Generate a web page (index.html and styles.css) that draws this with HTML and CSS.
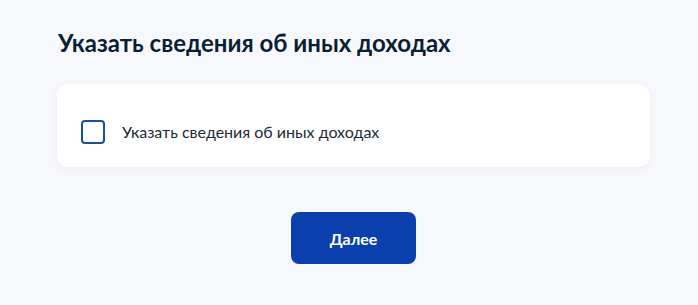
FILE: index.html
```html
<!DOCTYPE html>
<html lang="ru">
<head>
<meta charset="utf-8">
<link rel="stylesheet" href="styles.css">
</head>
<body>
<main class="page">
  <h1 class="title">Указать сведения об иных доходах</h1>
  <section class="card">
    <label class="check">
      <span class="box"></span>
      <span class="label">Указать сведения об иных доходах</span>
    </label>
  </section>
  <div class="actions">
    <button class="btn" type="button">Далее</button>
  </div>
</main>
</body>
</html>
```
FILE: styles.css
```css
html, body {
  margin: 0;
  padding: 0;
  background: #f7f8fc;
  font-family: Lato, "Noto Sans", sans-serif;
  color: #0b1f33;
}
.page {
  width: 593px;
  margin-left: 57px;
  padding-top: 29px;
}
.title {
  margin: 0 0 0 1px;
  font-size: 24px;
  font-weight: 700;
  line-height: 28px;
  color: #0b1f33;
}
.card {
  margin-top: 27px;
  background: #ffffff;
  border-radius: 12px;
  box-shadow: 0 2px 12px rgba(11, 31, 51, 0.04);
  padding: 36px 24px 23px;
}
.check {
  display: flex;
  align-items: center;
  gap: 17px;
}
.box {
  width: 20px;
  height: 20px;
  border: 2px solid #1d4d9c;
  border-radius: 4px;
  flex: none;
}
.label {
  font-size: 16px;
  line-height: 20px;
  color: #1c2a38;
}
.actions {
  display: flex;
  justify-content: center;
  margin-top: 45px;
}
.btn {
  width: 125px;
  height: 52px;
  border: none;
  border-radius: 8px;
  background: #0c3fae;
  color: #ffffff;
  font-family: Lato, "Noto Sans", sans-serif;
  font-size: 16px;
  font-weight: 700;
}
```
